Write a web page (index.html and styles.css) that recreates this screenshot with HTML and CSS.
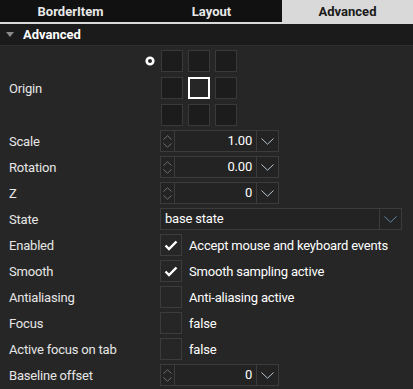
FILE: index.html
```html
<!DOCTYPE html>
<html>
<head>
<meta charset="utf-8">
<link rel="stylesheet" href="styles.css">
</head>
<body>
<div class="tabs">
  <div class="tab">BorderItem</div>
  <div class="tab">Layout</div>
  <div class="tab active">Advanced</div>
</div>
<div class="section-header">
  <svg class="caret" width="8" height="5" viewBox="0 0 8 5"><path d="M0 0H8L4 5Z" fill="#8a8a8a"/></svg>
  <span>Advanced</span>
</div>
<div class="content">
  <div class="row origin-row">
    <div class="label origin-label">
      <span class="origin-text">Origin</span>
      <svg class="origin-dot" width="10" height="10" viewBox="0 0 10 10"><circle cx="5" cy="5" r="3.3" fill="#262626" stroke="#ffffff" stroke-width="2.6"/></svg>
    </div>
    <div class="origin-grid">
      <div class="cell"></div><div class="cell"></div><div class="cell"></div>
      <div class="cell"></div><div class="cell selected"></div><div class="cell"></div>
      <div class="cell"></div><div class="cell"></div><div class="cell"></div>
    </div>
  </div>

  <div class="row">
    <div class="label">Scale</div>
    <div class="spin">
      <div class="spin-arrows">
        <svg width="9" height="5" viewBox="0 0 9 5"><path d="M0.5 4.5L4.5 0.8L8.5 4.5" fill="none" stroke="#6e6e6e"/></svg>
        <svg width="9" height="5" viewBox="0 0 9 5"><path d="M0.5 0.5L4.5 4.2L8.5 0.5" fill="none" stroke="#6e6e6e"/></svg>
      </div>
      <div class="spin-value">1.00</div>
      <div class="spin-drop"><svg width="13" height="7" viewBox="0 0 13 7"><path d="M0.5 0.5L6.5 6.2L12.5 0.5" fill="none" stroke="#b8c4ce"/></svg></div>
    </div>
  </div>

  <div class="row">
    <div class="label">Rotation</div>
    <div class="spin">
      <div class="spin-arrows">
        <svg width="9" height="5" viewBox="0 0 9 5"><path d="M0.5 4.5L4.5 0.8L8.5 4.5" fill="none" stroke="#6e6e6e"/></svg>
        <svg width="9" height="5" viewBox="0 0 9 5"><path d="M0.5 0.5L4.5 4.2L8.5 0.5" fill="none" stroke="#6e6e6e"/></svg>
      </div>
      <div class="spin-value">0.00</div>
      <div class="spin-drop"><svg width="13" height="7" viewBox="0 0 13 7"><path d="M0.5 0.5L6.5 6.2L12.5 0.5" fill="none" stroke="#b8c4ce"/></svg></div>
    </div>
  </div>

  <div class="row">
    <div class="label">Z</div>
    <div class="spin">
      <div class="spin-arrows">
        <svg width="9" height="5" viewBox="0 0 9 5"><path d="M0.5 4.5L4.5 0.8L8.5 4.5" fill="none" stroke="#6e6e6e"/></svg>
        <svg width="9" height="5" viewBox="0 0 9 5"><path d="M0.5 0.5L4.5 4.2L8.5 0.5" fill="none" stroke="#6e6e6e"/></svg>
      </div>
      <div class="spin-value">0</div>
      <div class="spin-drop"><svg width="13" height="7" viewBox="0 0 13 7"><path d="M0.5 0.5L6.5 6.2L12.5 0.5" fill="none" stroke="#b8c4ce"/></svg></div>
    </div>
  </div>

  <div class="row">
    <div class="label">State</div>
    <div class="combo">
      <div class="combo-value">base state</div>
      <div class="combo-drop"><svg width="13" height="7" viewBox="0 0 13 7"><path d="M0.5 0.5L6.5 6.2L12.5 0.5" fill="none" stroke="#5f86a6"/></svg></div>
    </div>
  </div>

  <div class="row">
    <div class="label">Enabled</div>
    <div class="check"><svg width="14" height="11" viewBox="0 0 14 11"><path d="M1.5 5.5L5 9L12.5 1.5" fill="none" stroke="#ffffff" stroke-width="2.4"/></svg></div>
    <div class="check-text">Accept mouse and keyboard events</div>
  </div>

  <div class="row">
    <div class="label">Smooth</div>
    <div class="check"><svg width="14" height="11" viewBox="0 0 14 11"><path d="M1.5 5.5L5 9L12.5 1.5" fill="none" stroke="#ffffff" stroke-width="2.4"/></svg></div>
    <div class="check-text">Smooth sampling active</div>
  </div>

  <div class="row">
    <div class="label">Antialiasing</div>
    <div class="check"></div>
    <div class="check-text">Anti-aliasing active</div>
  </div>

  <div class="row">
    <div class="label">Focus</div>
    <div class="check"></div>
    <div class="check-text">false</div>
  </div>

  <div class="row">
    <div class="label">Active focus on tab</div>
    <div class="check"></div>
    <div class="check-text">false</div>
  </div>

  <div class="row">
    <div class="label">Baseline offset</div>
    <div class="spin">
      <div class="spin-arrows">
        <svg width="9" height="5" viewBox="0 0 9 5"><path d="M0.5 4.5L4.5 0.8L8.5 4.5" fill="none" stroke="#6e6e6e"/></svg>
        <svg width="9" height="5" viewBox="0 0 9 5"><path d="M0.5 0.5L4.5 4.2L8.5 0.5" fill="none" stroke="#6e6e6e"/></svg>
      </div>
      <div class="spin-value">0</div>
      <div class="spin-drop"><svg width="13" height="7" viewBox="0 0 13 7"><path d="M0.5 0.5L6.5 6.2L12.5 0.5" fill="none" stroke="#b8c4ce"/></svg></div>
    </div>
  </div>
</div>
</body>
</html>
```

FILE: styles.css
```css
html, body {
  margin: 0;
  padding: 0;
  background: #262626;
  width: 413px;
  height: 389px;
  overflow: hidden;
  font-family: Roboto, "Liberation Sans", sans-serif;
  font-size: 13px;
  letter-spacing: -0.2px;
  color: #e6e6e6;
}
.tabs {
  display: flex;
  height: 22px;
  background: #111111;
  border-bottom: 2px solid #d9d9d9;
}
.tab {
  width: 141px;
  display: flex;
  align-items: center;
  justify-content: center;
  font-weight: bold;
  color: #e8e8e8;
  font-size: 13px;
  letter-spacing: 0;
}
.tab.active {
  width: auto;
  flex: 1;
  background: #d9d9d9;
  color: #1a1a1a;
}
.section-header {
  height: 21px;
  background: #1b1b1b;
  border-bottom: 1px solid #2e2e2e;
  display: flex;
  align-items: center;
  font-weight: bold;
  color: #ffffff;
  letter-spacing: 0;
}
.caret {
  margin-left: 6px;
  margin-right: 9px;
}
.content {
  padding-top: 4px;
}
.row {
  display: flex;
  align-items: center;
  height: 22px;
  margin-bottom: 4px;
}
.label {
  width: 151px;
  padding-left: 9px;
  flex-shrink: 0;
  white-space: nowrap;
}
.origin-row {
  height: 76px;
  align-items: stretch;
}
.origin-label {
  display: flex;
  align-items: center;
}
.origin-text {
  flex: 1;
}
.origin-dot {
  align-self: flex-start;
  margin-top: 6px;
  margin-right: 5px;
}
.origin-grid {
  margin-left: 1px;
  display: grid;
  grid-template-columns: repeat(3, 22px);
  grid-template-rows: repeat(3, 22px);
  gap: 5px;
}
.cell {
  box-sizing: border-box;
  background: #1c1c1c;
  border: 1px solid #393939;
}
.cell.selected {
  background: #262626;
  border: 2px solid #ffffff;
}
.spin {
  display: flex;
  box-sizing: border-box;
  width: 119px;
  height: 22px;
  border: 1px solid #3c3c3c;
  background: #232323;
}
.spin-arrows {
  width: 14px;
  border-right: 1px solid #3c3c3c;
  display: flex;
  flex-direction: column;
  align-items: center;
  justify-content: space-around;
  padding: 2px 0;
  box-sizing: border-box;
}
.spin-arrows svg {
  display: block;
}
.spin-value {
  flex: 1;
  text-align: right;
  padding-right: 4px;
  line-height: 20px;
  color: #ffffff;
}
.spin-drop {
  width: 21px;
  border-left: 1px solid #3c3c3c;
  display: flex;
  align-items: center;
  justify-content: center;
}
.combo {
  display: flex;
  box-sizing: border-box;
  width: 242px;
  height: 22px;
  border: 1px solid #3c3c3c;
  background: #232323;
}
.combo-value {
  flex: 1;
  padding-left: 4px;
  line-height: 20px;
  color: #ffffff;
}
.combo-drop {
  width: 21px;
  border-left: 1px solid #3c3c3c;
  display: flex;
  align-items: center;
  justify-content: center;
}
.check {
  box-sizing: border-box;
  width: 22px;
  height: 22px;
  border: 1px solid #3c3c3c;
  background: #262626;
  display: flex;
  align-items: center;
  justify-content: center;
}
.check-text {
  margin-left: 7px;
  color: #ffffff;
  white-space: nowrap;
}
```
